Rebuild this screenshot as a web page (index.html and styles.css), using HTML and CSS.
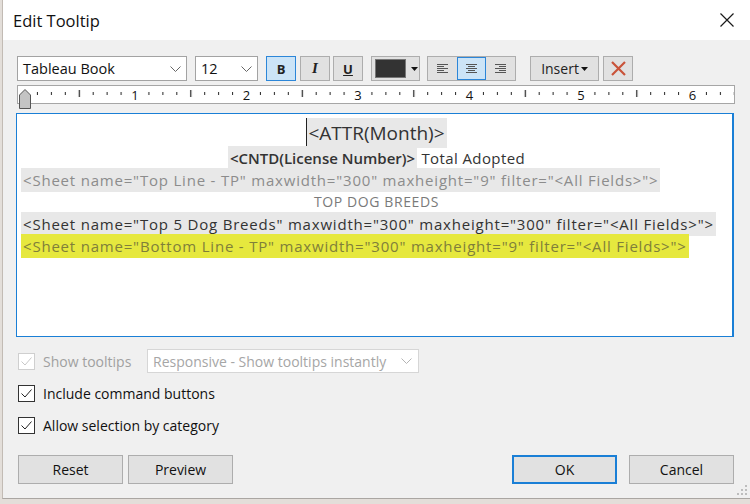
FILE: index.html
```html
<!DOCTYPE html>
<html lang="en">
<head>
  <meta charset="UTF-8" />
  <title>Edit Tooltip</title>
  <link rel="stylesheet" href="styles.css">
</head>
<body>

  <div class="dialog">
    <div class="titlebar">
      <span class="title">Edit Tooltip</span>
      <span class="close">
        <svg width="14" height="14" viewBox="0 0 14 14"><path d="M0.5 0.5 L13.5 13.5 M13.5 0.5 L0.5 13.5" stroke="#1a1a1a" stroke-width="1.2" fill="none"/></svg>
      </span>
    </div>

    <div class="content">
      <!-- formatting toolbar -->
      <div class="toolbar">
        <div class="select font-select">
          <span>Tableau Book</span>
          <svg class="chev" width="11" height="6" viewBox="0 0 11 6"><path d="M0.5 0.5 L5.5 5.5 L10.5 0.5" stroke="#666" fill="none"/></svg>
        </div>
        <div class="select size-select">
          <span>12</span>
          <svg class="chev" width="11" height="6" viewBox="0 0 11 6"><path d="M0.5 0.5 L5.5 5.5 L10.5 0.5" stroke="#666" fill="none"/></svg>
        </div>
        <button class="tb-btn b-btn active">B</button>
        <button class="tb-btn i-btn">I</button>
        <button class="tb-btn u-btn">U</button>
        <button class="tb-btn color-btn">
          <span class="swatch"></span>
          <svg width="7" height="4" viewBox="0 0 7 4"><path d="M0 0 H7 L3.5 4 Z" fill="#111"/></svg>
        </button>
        <div class="align-group">
          <button class="tb-btn align-btn">
            <svg width="11" height="9" viewBox="0 0 11 9"><path d="M0 0.5 H11 M0 2.5 H7 M0 4.5 H11 M0 6.5 H7 M0 8.5 H11" stroke="#555"/></svg>
          </button>
          <button class="tb-btn align-btn active">
            <svg width="11" height="9" viewBox="0 0 11 9"><path d="M0 0.5 H11 M2 2.5 H9 M0 4.5 H11 M2 6.5 H9 M0 8.5 H11" stroke="#555"/></svg>
          </button>
          <button class="tb-btn align-btn">
            <svg width="11" height="9" viewBox="0 0 11 9"><path d="M0 0.5 H11 M4 2.5 H11 M0 4.5 H11 M4 6.5 H11 M0 8.5 H11" stroke="#555"/></svg>
          </button>
        </div>
        <button class="tb-btn insert-btn">
          Insert
          <svg width="7" height="4" viewBox="0 0 7 4"><path d="M0 0 H7 L3.5 4 Z" fill="#111"/></svg>
        </button>
        <button class="tb-btn clear-btn">
          <svg width="15" height="15" viewBox="0 0 15 15"><path d="M1 1 L14 14 M14 1 L1 14" stroke="#c9533a" stroke-width="2.2" fill="none"/></svg>
        </button>
      </div>

      <!-- ruler -->
      <div class="ruler">
        <svg width="716" height="17" viewBox="0 0 716 17">
          <defs>
            <pattern id="ticks" x="5" y="0" width="111.5" height="17" patternUnits="userSpaceOnUse">
              <rect x="13.9" y="6" width="1" height="3" fill="#222"/>
              <rect x="27.9" y="6" width="1" height="3" fill="#222"/>
              <rect x="41.8" y="6" width="1" height="3" fill="#222"/>
              <rect x="55.7" y="4" width="1.2" height="7" fill="#222"/>
              <rect x="69.7" y="6" width="1" height="3" fill="#222"/>
              <rect x="83.6" y="6" width="1" height="3" fill="#222"/>
              <rect x="97.6" y="6" width="1" height="3" fill="#222"/>
            </pattern>
          </defs>
          <rect x="5" y="0" width="711" height="17" fill="url(#ticks)"/>
          <g class="ruler-num">
            <text x="117" y="13.5">1</text>
            <text x="228.5" y="13.5">2</text>
            <text x="340" y="13.5">3</text>
            <text x="451.5" y="13.5">4</text>
            <text x="563" y="13.5">5</text>
            <text x="674.5" y="13.5">6</text>
          </g>
        </svg>
        <svg class="thumb" width="12" height="20" viewBox="0 0 12 20">
          <path d="M6 0.5 L11.5 6 V19.5 H0.5 V6 Z" fill="#c4c4c4" stroke="#555"/>
        </svg>
      </div>

      <!-- tooltip body -->
      <div class="editor">
        <div class="line center big"><span class="field caret">&lt;ATTR(Month)&gt;</span></div>
        <div class="line center sub"><span class="field strong">&lt;CNTD(License Number)&gt;</span> Total Adopted</div>
        <div class="line sheet muted"><span class="field">&lt;Sheet name="Top Line - TP" maxwidth="300" maxheight="9" filter="&lt;All Fields&gt;"&gt;</span></div>
        <div class="line center caps">TOP DOG BREEDS</div>
        <div class="line sheet"><span class="field">&lt;Sheet name="Top 5 Dog Breeds" maxwidth="300" maxheight="300" filter="&lt;All Fields&gt;"&gt;</span></div>
        <div class="line sheet marked"><span class="field">&lt;Sheet name="Bottom Line - TP" maxwidth="300" maxheight="9" filter="&lt;All Fields&gt;"&gt;</span></div>
      </div>

      <!-- options -->
      <div class="options">
        <div class="opt-row disabled">
          <span class="check">
            <svg width="11" height="9" viewBox="0 0 11 9"><path d="M0.5 4.5 L4 8 L10.5 0.5" stroke="#c8c8c8" fill="none"/></svg>
          </span>
          <span class="opt-label short">Show tooltips</span>
          <div class="select mode-select">
            <span>Responsive - Show tooltips instantly</span>
            <svg class="chev" width="11" height="6" viewBox="0 0 11 6"><path d="M0.5 0.5 L5.5 5.5 L10.5 0.5" stroke="#b4b4b4" fill="none"/></svg>
          </div>
        </div>
        <div class="opt-row">
          <span class="check">
            <svg width="11" height="9" viewBox="0 0 11 9"><path d="M0.5 4.5 L4 8 L10.5 0.5" stroke="#222" fill="none"/></svg>
          </span>
          <span class="opt-label">Include command buttons</span>
        </div>
        <div class="opt-row">
          <span class="check">
            <svg width="11" height="9" viewBox="0 0 11 9"><path d="M0.5 4.5 L4 8 L10.5 0.5" stroke="#222" fill="none"/></svg>
          </span>
          <span class="opt-label">Allow selection by category</span>
        </div>
      </div>

      <div class="actions">
        <button class="btn">Reset</button>
        <button class="btn">Preview</button>
        <div class="spacer"></div>
        <button class="btn default">OK</button>
        <button class="btn">Cancel</button>
      </div>
    </div>

    <svg class="grip" width="11" height="11" viewBox="0 0 11 11">
      <rect x="8" y="0" width="2" height="2" fill="#bdbdbd"/>
      <rect x="4" y="4" width="2" height="2" fill="#bdbdbd"/>
      <rect x="8" y="4" width="2" height="2" fill="#bdbdbd"/>
      <rect x="0" y="8" width="2" height="2" fill="#bdbdbd"/>
      <rect x="4" y="8" width="2" height="2" fill="#bdbdbd"/>
      <rect x="8" y="8" width="2" height="2" fill="#bdbdbd"/>
    </svg>
  </div>

</body>
</html>
```

FILE: styles.css
```css
* {
  box-sizing: border-box;
}

body {
  margin: 0;
  background: #e3ded9;
  font-family: 'Open Sans', sans-serif;
  color: #111;
}

.dialog {
  position: relative;
  width: 748px;
  height: 499px;
  margin-left: 2px;
  background: #f0f0f0;
  border-left: 1px solid #c2bbb4;
  border-bottom: 1px solid #aaa6a2;
}

.titlebar {
  height: 40px;
  background: #fff;
  display: flex;
  align-items: center;
  justify-content: space-between;
  padding: 0 16px 0 10px;
}

.title {
  font-size: 16.5px;
  color: #111;
}

.close svg {
  display: block;
}

.content {
  padding: 16px 14px 0 14px;
}

/* toolbar */

.toolbar {
  display: flex;
  height: 25px;
}

.select {
  height: 25px;
  background: #fff;
  border: 1px solid #a3a3a3;
  display: flex;
  align-items: center;
  justify-content: space-between;
  padding: 0 5px 0 5px;
  font-size: 14.5px;
  color: #111;
}

.font-select {
  width: 170px;
}

.size-select {
  width: 63px;
  margin-left: 8px;
}

.tb-btn {
  height: 25px;
  width: 30px;
  padding: 0;
  background: #e1e1e1;
  border: 1px solid #adadad;
  font-family: 'Open Sans', sans-serif;
  color: #222;
  display: flex;
  align-items: center;
  justify-content: center;
}

.tb-btn.active {
  background: #cce4f7;
  border-color: #2c86d8;
}

.b-btn {
  margin-left: 8px;
  font-weight: bold;
  font-size: 13px;
}

.i-btn {
  margin-left: 4px;
  font-family: 'Liberation Serif', serif;
  font-style: italic;
  font-weight: bold;
  font-size: 15px;
}

.u-btn {
  margin-left: 3px;
  font-weight: bold;
  font-size: 13px;
  text-decoration: underline;
}

.color-btn {
  margin-left: 8px;
  width: 49px;
  gap: 5px;
  padding-left: 2px;
}

.swatch {
  width: 31px;
  height: 19px;
  background: #333;
  border: 1px solid #777;
}

.align-group {
  margin-left: 7px;
  display: flex;
  border: 1px solid #adadad;
  background: #e1e1e1;
}

.align-btn {
  width: 29px;
  height: 23px;
  border-color: #e1e1e1;
}

.insert-btn {
  margin-left: 14px;
  width: 69px;
  font-size: 14px;
  gap: 2px;
}

.clear-btn {
  margin-left: 4px;
}

/* ruler */

.ruler {
  position: relative;
  margin-top: 4px;
  width: 718px;
  height: 19px;
  background: #fff;
  border: 1px solid #a6a6a6;
}

.ruler svg {
  display: block;
}

.ruler-num text {
  font-family: 'Open Sans', sans-serif;
  font-size: 13px;
  text-anchor: middle;
  fill: #111;
}

.ruler .thumb {
  position: absolute;
  left: 1px;
  top: 3px;
}

/* editor */

.editor {
  margin-top: 9px;
  margin-left: -1px;
  width: 718px;
  height: 224px;
  background: #fff;
  border: 1px solid #1a7fd6;
  border-right-width: 2px;
  padding: 5px 0 0 4px;
  font-family: 'Open Sans', sans-serif;
  font-size: 15px;
  color: #333;
}

.line {
  height: 22px;
  line-height: 22px;
  white-space: nowrap;
}

.line.center {
  text-align: center;
}

.line.big {
  height: 28px;
  line-height: 28px;
  font-size: 19px;
}

.line.sub {
  letter-spacing: 0.4px;
}

.line.sheet {
  letter-spacing: 0.8px;
}

.field {
  background: #e8e8e8;
  padding: 2px 2px;
}

.field.caret {
  border-left: 1px solid #222;
  padding-left: 1px;
}

.field.strong {
  font-weight: 600;
  letter-spacing: 0;
}

.line.muted {
  color: #8c8c8c;
}

.line.caps {
  color: #7a7a7a;
  font-size: 14px;
  letter-spacing: 0.6px;
}

.line.marked {
  color: #807f3a;
}

.line.marked .field {
  background: #e6e83e;
}

/* options */

.options {
  margin-top: 8px;
}

.opt-row {
  height: 32px;
  display: flex;
  align-items: center;
  font-size: 14px;
}

.check {
  width: 17px;
  height: 17px;
  border: 1px solid #333;
  background: #fff;
  display: flex;
  align-items: center;
  justify-content: center;
  margin-left: 1px;
}

.opt-label {
  margin-left: 8px;
}

.opt-label.short {
  width: 104px;
}

.disabled .check {
  border-color: #cfcfcf;
}

.disabled .opt-label {
  color: #a0a0a0;
}

.mode-select {
  width: 272px;
  height: 24px;
  border-color: #d6d6d6;
  color: #a6a6a6;
  font-size: 14px;
  padding-right: 6px;
}

/* bottom buttons */

.actions {
  margin-top: 14px;
  margin-right: 2px;
  display: flex;
}

.spacer {
  flex: 1;
}

.btn {
  width: 105px;
  height: 29px;
  background: #e1e1e1;
  border: 1px solid #adadad;
  font-family: 'Open Sans', sans-serif;
  font-size: 14px;
  color: #111;
  margin-left: 5px;
}

.btn:first-child {
  margin-left: 1px;
}

.btn.default {
  border: 2px solid #1a7fd6;
}

.btn:last-child {
  margin-left: 12px;
}

.grip {
  position: absolute;
  right: 2px;
  bottom: 2px;
}
```
